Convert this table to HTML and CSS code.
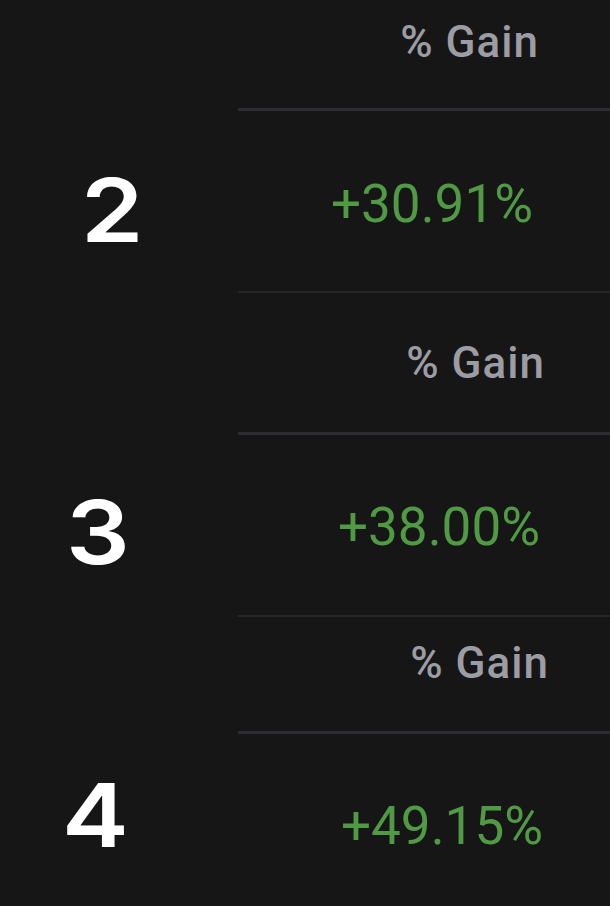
FILE: index.html
```html
<!DOCTYPE html>
<html lang="en">
<head>
<meta charset="utf-8">
<title>% Gain</title>
<link rel="stylesheet" href="styles.css">
</head>
<body>
<main class="board">
  <section class="block b1">
    <div class="head"><div class="head-spacer"></div><div class="head-cell">% Gain</div></div>
    <div class="row"><div class="rank"><span class="rank-num">2</span></div><div class="val">+30.91%</div></div>
  </section>
  <section class="block b2">
    <div class="head"><div class="head-spacer"></div><div class="head-cell">% Gain</div></div>
    <div class="row"><div class="rank"><span class="rank-num">3</span></div><div class="val">+38.00%</div></div>
  </section>
  <section class="block b3">
    <div class="head"><div class="head-spacer"></div><div class="head-cell">% Gain</div></div>
    <div class="row"><div class="rank"><span class="rank-num">4</span></div><div class="val">+49.15%</div></div>
  </section>
</main>
</body>
</html>
```
FILE: styles.css
```css
html, body {
  margin: 0;
  padding: 0;
  background: #161616;
}
.board {
  width: 610px;
  height: 906px;
  overflow: hidden;
  background: #161616;
}
.block {
  --head-top: 20px;
  --head-bottom: 44px;
  --head-right: 71px;
  --val-right: 77px;
  --val-shift: 7px;
  --rank-left: 81px;
  --rank-pt: 16px;
  --rank-pb: 0px;
}
.b2 {
  --head-top: 48px;
  --head-bottom: 47px;
  --head-right: 65px;
  --val-right: 70px;
  --val-shift: 4px;
  --rank-left: 66px;
  --rank-pt: 12px;
}
.b3 {
  --head-top: 24px;
  --head-bottom: 46px;
  --head-right: 61px;
  --val-right: 67px;
  --val-shift: 5px;
  --rank-left: 62px;
  --rank-pt: 0px;
  --rank-pb: 21px;
}
.head, .row {
  display: grid;
  grid-template-columns: 238px 1fr;
}
.head-cell {
  padding: var(--head-top) var(--head-right) var(--head-bottom) 0;
  border-bottom: 3px solid #2c2c31;
  text-align: right;
  font-family: Roboto, "Noto Sans", sans-serif;
  font-weight: 500;
  font-size: 44px;
  line-height: 44px;
  letter-spacing: 1px;
  color: #9c9ca4;
}
.row {
  height: 182px;
}
.rank {
  display: flex;
  align-items: center;
  padding: var(--rank-pt) 0 var(--rank-pb) var(--rank-left);
  box-sizing: border-box;
  font-family: Inter, "Noto Sans", sans-serif;
  font-weight: 600;
  font-size: 88px;
  line-height: 88px;
  color: #ffffff;
}
.rank-num {
  display: inline-block;
  transform: scaleX(1.14);
  transform-origin: left center;
}
.val {
  display: flex;
  align-items: center;
  justify-content: flex-end;
  padding-right: var(--val-right);
  padding-top: var(--val-shift);
  border-bottom: 2px solid #262629;
  font-family: Roboto, "Noto Sans", sans-serif;
  font-stretch: 88%;
  font-weight: 400;
  font-size: 53px;
  line-height: 53px;
  color: #4f9a43;
}
```
